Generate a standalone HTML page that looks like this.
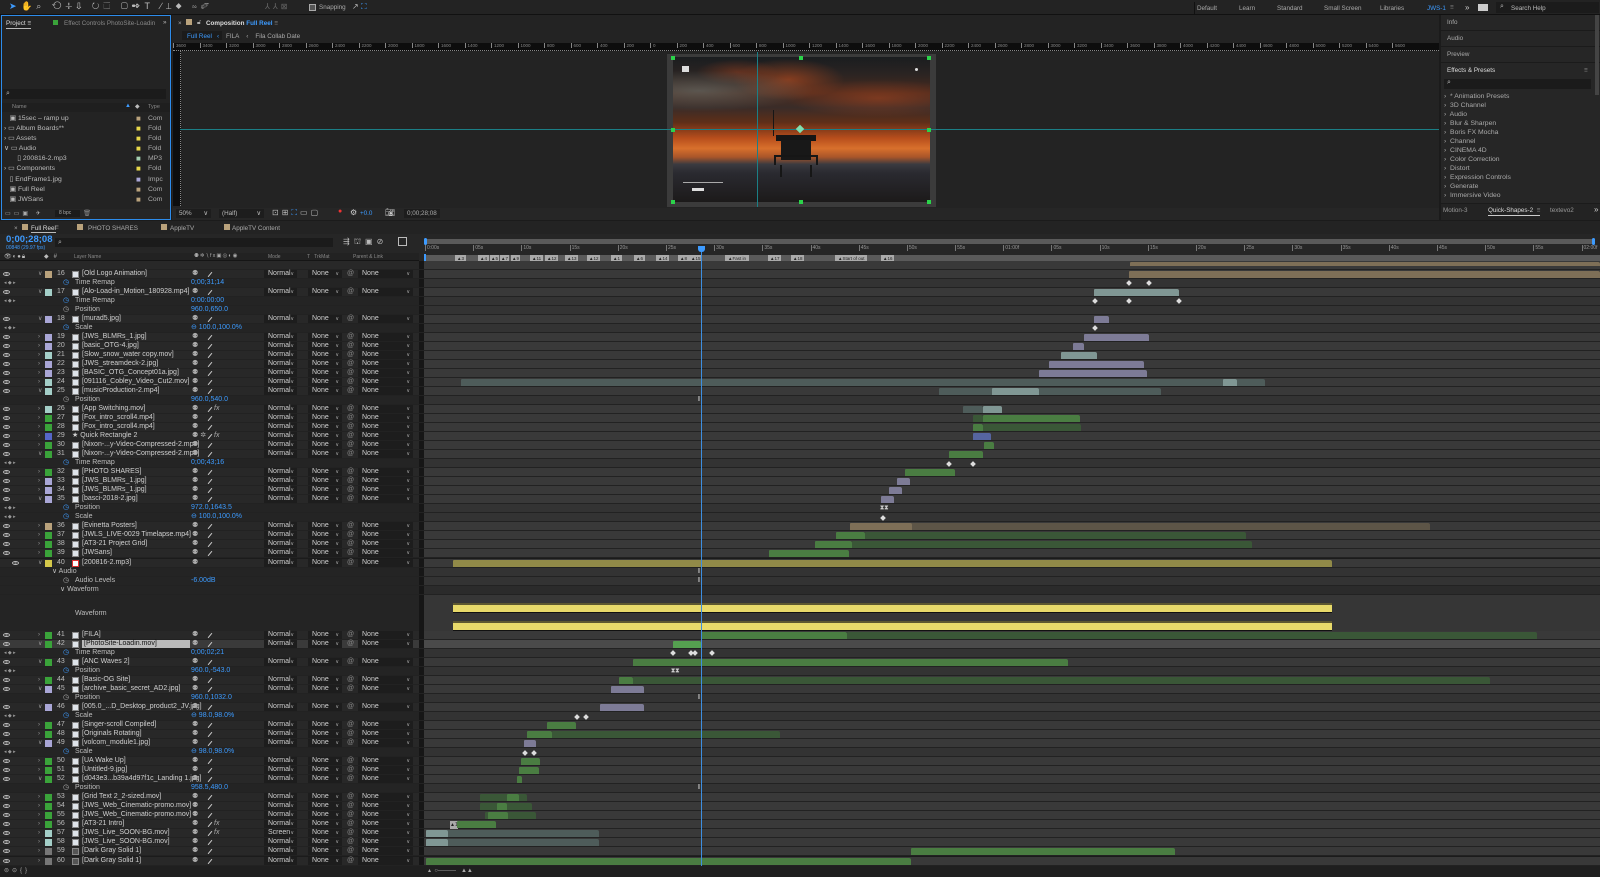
<!DOCTYPE html>
<html><head><meta charset="utf-8"><style>
*{margin:0;padding:0;box-sizing:border-box}
body{width:1600px;height:877px;overflow:hidden;background:#1b1b1b;font-family:"Liberation Sans",sans-serif;font-size:6.3px;color:#a8a8a8;position:relative}
em,i{font-style:normal}u,s{text-decoration:none}
.a{position:absolute;white-space:nowrap}
.r{position:absolute;left:0;width:1600px;height:9px;font-size:7px;background:linear-gradient(90deg,#282828 0,#282828 419px,#161616 419px,#161616 424px,#393939 424px);border-bottom:1px solid #222}
.r.p{background:linear-gradient(90deg,#242424 0,#242424 419px,#161616 419px,#161616 424px,#333 424px)}
.r.sel{background:linear-gradient(90deg,#3a3a3a 0,#3a3a3a 419px,#161616 419px,#161616 424px,#4a4a4a 424px)}
.r>*{position:absolute;top:0;line-height:8px;white-space:nowrap}
.eye{left:3px;top:2px!important;width:7px;height:4px;border:1px solid #bbb;border-radius:50%;background:radial-gradient(#bbb 0 1px,transparent 1.3px)}
.tw{left:38px;color:#999;font-size:6px}
.lb{left:45px;top:1px!important;width:7px;height:7px}
.n{left:57px;color:#bbb}
.ic{left:72px;top:1px!important;width:7px;height:7px;background:#dfe4ea;border:1px solid #888}
.nm{left:82px;color:#cfcfcf}
.sh{left:192px;color:#aaa}
.sl{left:207px;width:6px;height:1px;top:4px!important;background:#ccc;transform:rotate(-50deg)}
.fx{left:214px;font-style:italic;color:#aaa}
.md{left:264px;width:33px;height:8px;background:#1d1d1d;color:#cfcfcf;padding-left:4px}
.md:after,.tm:after,.pl:after{content:"∨";position:absolute;right:3px;font-size:5px;color:#aaa}
.tm{left:308px;width:34px;height:8px;background:#1d1d1d;color:#cfcfcf;padding-left:4px}
.sp{left:347px;color:#888}
.pl{left:358px;width:55px;height:8px;background:#1d1d1d;color:#cfcfcf;padding-left:4px}
.pn{left:75px;color:#bdbdbd}
.pw{left:63px;color:#3d9bff}
.pv{left:191px;color:#3d9bff}
.kn{left:4px;color:#999;font-size:5px}
b{position:absolute;top:1px!important;height:7px;border-radius:1px 2px 0 0}
.g{background:#4a7d42}.gf{background:#3a5737}.t{background:#809794}.tf{background:#4e5c5a}.v{background:#7d7b96}.tn{background:#7e6f57}.tnf{background:#5d5547}.bl{background:#56659f}.y{background:#918a48}
.k{position:absolute;top:2.5px!important;width:4px;height:4px;background:#ddd;transform:rotate(45deg)}
.I{position:absolute;color:#ccc;font-size:7px;font-weight:bold}
</style></head><body>

<div class="a" style="left:0;top:0;width:1600px;height:15px;background:#232323;border-bottom:1px solid #111"></div>
<div class="a" style="left:9px;top:1px;font-size:9px;color:#3d9bff">➤</div>
<div class="a" style="left:21px;top:1px;font-size:9px;color:#bbb;letter-spacing:4px">✋⌕ ⟲✛⇩ ↻⬚ ▢✒T ∕⊥⬥ ∾✐</div>
<div class="a" style="left:265px;top:2px;font-size:8px;color:#666;letter-spacing:3px">⅄⅄⊠</div>
<div class="a" style="left:309px;top:4px;width:7px;height:7px;border:1px solid #aaa;background:#555"></div>
<div class="a" style="left:319px;top:4px;color:#aaa">Snapping</div>
<div class="a" style="left:352px;top:2px;color:#bbb;font-size:8px">↗ <span style="color:#3d9bff">⛶</span></div>
<div class="a" style="left:1194px;top:2px;width:1px;height:12px;background:#111"></div>
<div class="a" style="left:1197px;top:5px;color:#aaa">Default</div>
<div class="a" style="left:1239px;top:5px;color:#aaa">Learn</div>
<div class="a" style="left:1277px;top:5px;color:#aaa">Standard</div>
<div class="a" style="left:1324px;top:5px;color:#aaa">Small Screen</div>
<div class="a" style="left:1380px;top:5px;color:#aaa">Libraries</div>
<div class="a" style="left:1427px;top:5px;color:#3d9bff">JWS-1</div>
<div class="a" style="left:1450px;top:4px;color:#888">≡</div>
<div class="a" style="left:1465px;top:3px;color:#ccc;font-size:8px">»</div>
<div class="a" style="left:1478px;top:4px;width:10px;height:7px;background:#ccc"></div>
<div class="a" style="left:1496px;top:2px;width:103px;height:11px;background:#1b1b1b"></div>
<div class="a" style="left:1500px;top:3px;color:#bbb;font-size:7px">⌕</div>
<div class="a" style="left:1511px;top:5px;color:#bbb">Search Help</div>

<div class="a" style="left:1px;top:15px;width:170px;height:205px;background:#232323;border:1px solid #2d8ceb"></div>
<div class="a" style="left:6px;top:20px;color:#ddd;border-bottom:1px solid #bbb;padding-bottom:1px">Project ≡</div>
<div class="a" style="left:53px;top:20px;width:5px;height:5px;background:#3aa33a"></div>
<div class="a" style="left:64px;top:20px;color:#888">Effect Controls PhotoSite-Loadin</div>
<div class="a" style="left:163px;top:19px;color:#bbb">»</div>
<div class="a" style="left:3px;top:89px;width:163px;height:10px;background:#1b1b1b"></div>
<div class="a" style="left:6px;top:90px;color:#bbb;font-size:7px">⌕</div>
<div class="a" style="left:2px;top:103px;width:168px;height:9px;background:#1f1f1f"></div>
<div class="a" style="left:12px;top:104px;color:#888;font-size:5.5px">Name</div>
<div class="a" style="left:125px;top:103px;color:#3d9bff;font-size:6px">▲</div>
<div class="a" style="left:135px;top:103px;color:#bbb;font-size:6px">◆</div>
<div class="a" style="left:148px;top:104px;color:#888;font-size:5.5px">Type</div>
<div class="a" style="left:4px;top:114px;line-height:10.1px;color:#bdbdbd;font-size:6.8px">
<div>&nbsp;&nbsp;&nbsp;▣ 15sec – ramp up</div><div>› ▭ Album Boards**</div><div>› ▭ Assets</div><div>∨ ▭ Audio</div><div>&nbsp;&nbsp;&nbsp;&nbsp;&nbsp;&nbsp;&nbsp;▯ 200816-2.mp3</div><div>› ▭ Components</div><div>&nbsp;&nbsp;&nbsp;▯ EndFrame1.jpg</div><div>&nbsp;&nbsp;&nbsp;▣ Full Reel</div><div>&nbsp;&nbsp;&nbsp;▣ JWSans</div></div>
<div class="a" style="left:136px;top:114px;line-height:10.1px;font-size:8px"><div style="color:#b9a27c">■</div><div style="color:#e8d84a">■</div><div style="color:#e8d84a">■</div><div style="color:#e8d84a">■</div><div style="color:#a4cfb0">■</div><div style="color:#e8d84a">■</div><div style="color:#a9a6d6">■</div><div style="color:#b9a27c">■</div><div style="color:#b9a27c">■</div></div>
<div class="a" style="left:148px;top:114px;line-height:10.1px;color:#aaa;font-size:6.8px"><div>Com</div><div>Fold</div><div>Fold</div><div>Fold</div><div>MP3</div><div>Fold</div><div>Impc</div><div>Com</div><div>Com</div></div>
<div class="a" style="left:2px;top:209px;width:168px;height:10px;background:#262626"></div>
<div class="a" style="left:5px;top:210px;color:#aaa;font-size:6px;letter-spacing:3px">▭▭▣ ✈</div>
<div class="a" style="left:55px;top:210px;width:25px;height:7px;background:#1b1b1b;color:#aaa;font-size:5px;padding-left:4px;line-height:7px">8 bpc</div>
<div class="a" style="left:83px;top:209px;color:#888">🗑</div>

<div class="a" style="left:172px;top:15px;width:1267px;height:205px;background:#232323"></div>
<div class="a" style="left:178px;top:20px;color:#aaa">×</div>
<div class="a" style="left:186px;top:19px;width:6px;height:6px;background:#b9a27c"></div>
<div class="a" style="left:197px;top:19px;color:#aaa">🔓︎</div>
<div class="a" style="left:206px;top:20px;color:#ddd;font-weight:bold">Composition <span style="color:#3d9bff">Full Reel</span> <span style="color:#888;font-weight:normal">≡</span></div>
<div class="a" style="left:182px;top:31px;width:40px;height:9px;background:#1b1b1b"></div>
<div class="a" style="left:187px;top:33px;color:#3d9bff">Full Reel</div>
<div class="a" style="left:217px;top:33px;color:#3d9bff">‹</div>
<div class="a" style="left:226px;top:33px;color:#aaa">FILA&nbsp;&nbsp;&nbsp;&nbsp;‹&nbsp;&nbsp;&nbsp;&nbsp;Fila Collab Date</div>
<div class="a" style="left:173px;top:43px;width:1266px;height:8px;background:#0d0d0d;border-bottom:1px dotted #888;overflow:hidden">
<div class="a" style="left:0;top:0;color:#888;font-size:4.5px">
<span style="display:inline-block;width:26.5px;border-left:1px solid #888;padding-left:2px">3600</span><span style="display:inline-block;width:26.5px;border-left:1px solid #888;padding-left:2px">3400</span><span style="display:inline-block;width:26.5px;border-left:1px solid #888;padding-left:2px">3200</span><span style="display:inline-block;width:26.5px;border-left:1px solid #888;padding-left:2px">3000</span><span style="display:inline-block;width:26.5px;border-left:1px solid #888;padding-left:2px">2800</span><span style="display:inline-block;width:26.5px;border-left:1px solid #888;padding-left:2px">2600</span><span style="display:inline-block;width:26.5px;border-left:1px solid #888;padding-left:2px">2400</span><span style="display:inline-block;width:26.5px;border-left:1px solid #888;padding-left:2px">2200</span><span style="display:inline-block;width:26.5px;border-left:1px solid #888;padding-left:2px">2000</span><span style="display:inline-block;width:26.5px;border-left:1px solid #888;padding-left:2px">1800</span><span style="display:inline-block;width:26.5px;border-left:1px solid #888;padding-left:2px">1600</span><span style="display:inline-block;width:26.5px;border-left:1px solid #888;padding-left:2px">1400</span><span style="display:inline-block;width:26.5px;border-left:1px solid #888;padding-left:2px">1200</span><span style="display:inline-block;width:26.5px;border-left:1px solid #888;padding-left:2px">1000</span><span style="display:inline-block;width:26.5px;border-left:1px solid #888;padding-left:2px">800</span><span style="display:inline-block;width:26.5px;border-left:1px solid #888;padding-left:2px">600</span><span style="display:inline-block;width:26.5px;border-left:1px solid #888;padding-left:2px">400</span><span style="display:inline-block;width:26.5px;border-left:1px solid #888;padding-left:2px">200</span><span style="display:inline-block;width:26.5px;border-left:1px solid #888;padding-left:2px">0</span><span style="display:inline-block;width:26.5px;border-left:1px solid #888;padding-left:2px">200</span><span style="display:inline-block;width:26.5px;border-left:1px solid #888;padding-left:2px">400</span><span style="display:inline-block;width:26.5px;border-left:1px solid #888;padding-left:2px">600</span><span style="display:inline-block;width:26.5px;border-left:1px solid #888;padding-left:2px">800</span><span style="display:inline-block;width:26.5px;border-left:1px solid #888;padding-left:2px">1000</span><span style="display:inline-block;width:26.5px;border-left:1px solid #888;padding-left:2px">1200</span><span style="display:inline-block;width:26.5px;border-left:1px solid #888;padding-left:2px">1400</span><span style="display:inline-block;width:26.5px;border-left:1px solid #888;padding-left:2px">1600</span><span style="display:inline-block;width:26.5px;border-left:1px solid #888;padding-left:2px">1800</span><span style="display:inline-block;width:26.5px;border-left:1px solid #888;padding-left:2px">2000</span><span style="display:inline-block;width:26.5px;border-left:1px solid #888;padding-left:2px">2200</span><span style="display:inline-block;width:26.5px;border-left:1px solid #888;padding-left:2px">2400</span><span style="display:inline-block;width:26.5px;border-left:1px solid #888;padding-left:2px">2600</span><span style="display:inline-block;width:26.5px;border-left:1px solid #888;padding-left:2px">2800</span><span style="display:inline-block;width:26.5px;border-left:1px solid #888;padding-left:2px">3000</span><span style="display:inline-block;width:26.5px;border-left:1px solid #888;padding-left:2px">3200</span><span style="display:inline-block;width:26.5px;border-left:1px solid #888;padding-left:2px">3400</span><span style="display:inline-block;width:26.5px;border-left:1px solid #888;padding-left:2px">3600</span><span style="display:inline-block;width:26.5px;border-left:1px solid #888;padding-left:2px">3800</span><span style="display:inline-block;width:26.5px;border-left:1px solid #888;padding-left:2px">4000</span><span style="display:inline-block;width:26.5px;border-left:1px solid #888;padding-left:2px">4200</span><span style="display:inline-block;width:26.5px;border-left:1px solid #888;padding-left:2px">4400</span><span style="display:inline-block;width:26.5px;border-left:1px solid #888;padding-left:2px">4600</span><span style="display:inline-block;width:26.5px;border-left:1px solid #888;padding-left:2px">4800</span><span style="display:inline-block;width:26.5px;border-left:1px solid #888;padding-left:2px">5000</span><span style="display:inline-block;width:26.5px;border-left:1px solid #888;padding-left:2px">5200</span><span style="display:inline-block;width:26.5px;border-left:1px solid #888;padding-left:2px">5400</span><span style="display:inline-block;width:26.5px;border-left:1px solid #888;padding-left:2px">5600</span></div></div>
<div class="a" style="left:173px;top:51px;width:8px;height:155px;background:#0d0d0d;border-right:1px dotted #888"></div>
<div class="a" style="left:667px;top:54px;width:269px;height:153px;background:#3b3b3b"></div>
<div class="a" style="left:673px;top:57px;width:257px;height:145px;background:linear-gradient(180deg,#1a1d20 0%,#2b2422 12%,#4a2a1e 25%,#3a2c28 35%,#5e2e18 45%,#b84e1c 56%,#d8702c 63%,#a9552a 69%,#3a3a40 74%,#2a2a30 80%,#1c1a1a 100%)"></div>
<div class="a" style="left:673px;top:57px;width:257px;height:75px;background:radial-gradient(ellipse at 10% 45%,rgba(110,130,128,.5),transparent 35%),radial-gradient(ellipse at 45% 30%,rgba(200,80,30,.55),transparent 28%),radial-gradient(ellipse at 80% 55%,rgba(190,75,30,.45),transparent 32%),radial-gradient(ellipse at 25% 20%,rgba(180,70,30,.4),transparent 15%)"></div>
<div class="a" style="left:776px;top:135px;width:40px;height:6px;background:#151515"></div>
<div class="a" style="left:781px;top:140px;width:30px;height:20px;background:#181818"></div>
<div class="a" style="left:774px;top:155px;width:44px;height:10px;border:2px solid #161616;border-bottom:none"></div>
<div class="a" style="left:780px;top:165px;width:32px;height:12px;border-left:2px solid #161616;border-right:2px solid #161616"></div>
<div class="a" style="left:773px;top:110px;width:1px;height:26px;background:#161616"></div>
<div class="a" style="left:682px;top:66px;width:7px;height:6px;background:#ddd"></div>
<div class="a" style="left:915px;top:68px;width:3px;height:3px;background:#ddd;border-radius:50%"></div>
<div class="a" style="left:180px;top:129px;width:1259px;height:1px;background:#1b7f86"></div>
<div class="a" style="left:757px;top:52px;width:1px;height:155px;background:#1b7f86"></div>
<div class="a" style="left:797px;top:126px;width:6px;height:6px;background:#7fe0b0;transform:rotate(45deg)"></div>
<div class="a" style="left:671px;top:56px;width:4px;height:4px;background:#2bd34a"></div>
<div class="a" style="left:799px;top:56px;width:4px;height:4px;background:#2bd34a"></div>
<div class="a" style="left:927px;top:56px;width:4px;height:4px;background:#2bd34a"></div>
<div class="a" style="left:671px;top:128px;width:4px;height:4px;background:#2bd34a"></div>
<div class="a" style="left:927px;top:128px;width:4px;height:4px;background:#2bd34a"></div>
<div class="a" style="left:671px;top:200px;width:4px;height:4px;background:#2bd34a"></div>
<div class="a" style="left:799px;top:200px;width:4px;height:4px;background:#2bd34a"></div>
<div class="a" style="left:927px;top:200px;width:4px;height:4px;background:#2bd34a"></div>
<div class="a" style="left:683px;top:182px;width:40px;height:1px;background:#aaa"></div>
<div class="a" style="left:692px;top:188px;width:12px;height:3px;background:#ddd"></div>
<div class="a" style="left:172px;top:208px;width:1267px;height:12px;background:#262626"></div>
<div class="a" style="left:176px;top:209px;width:35px;height:9px;background:#1d1d1d;color:#bbb;padding-left:3px;line-height:9px">50%<span style="float:right;margin-right:3px">∨</span></div>
<div class="a" style="left:219px;top:209px;width:45px;height:9px;background:#1d1d1d;color:#bbb;padding-left:3px;line-height:9px">(Half)<span style="float:right;margin-right:3px">∨</span></div>
<div class="a" style="left:272px;top:208px;color:#bbb;font-size:8px;letter-spacing:3px">⊡⊞<span style="color:#3d9bff">⛶</span>▭▢</div>
<div class="a" style="left:338px;top:208px;color:#e33;font-size:7px">●</div>
<div class="a" style="left:350px;top:208px;color:#ccc;font-size:8px">⚙</div>
<div class="a" style="left:360px;top:210px;color:#3d9bff">+0.0</div>
<div class="a" style="left:385px;top:208px;color:#ccc;font-size:8px">📷︎</div>
<div class="a" style="left:404px;top:209px;width:36px;height:9px;background:#1d1d1d;color:#aaa;padding-left:3px;line-height:9px">0;00;28;08</div>

<div class="a" style="left:1441px;top:15px;width:159px;height:15px;background:#262626"></div>
<div class="a" style="left:1447px;top:19px;color:#aaa">Info</div>
<div class="a" style="left:1441px;top:31px;width:159px;height:15px;background:#262626"></div>
<div class="a" style="left:1447px;top:35px;color:#aaa">Audio</div>
<div class="a" style="left:1441px;top:47px;width:159px;height:15px;background:#262626"></div>
<div class="a" style="left:1447px;top:51px;color:#aaa">Preview</div>
<div class="a" style="left:1441px;top:63px;width:159px;height:140px;background:#262626"></div>
<div class="a" style="left:1447px;top:67px;color:#ddd">Effects &amp; Presets</div>
<div class="a" style="left:1584px;top:67px;color:#888">≡</div>
<div class="a" style="left:1444px;top:79px;width:147px;height:10px;background:#1b1b1b;color:#bbb;padding-left:3px;font-size:7px">⌕</div>
<div class="a" style="left:1444px;top:92px;line-height:9.03px;color:#aaa;font-size:6.8px">
<div>›&nbsp; * Animation Presets</div><div>›&nbsp; 3D Channel</div><div>›&nbsp; Audio</div><div>›&nbsp; Blur &amp; Sharpen</div><div>›&nbsp; Boris FX Mocha</div><div>›&nbsp; Channel</div><div>›&nbsp; CINEMA 4D</div><div>›&nbsp; Color Correction</div><div>›&nbsp; Distort</div><div>›&nbsp; Expression Controls</div><div>›&nbsp; Generate</div><div>›&nbsp; Immersive Video</div></div>
<div class="a" style="left:1595px;top:15px;width:4px;height:80px;background:#444"></div>
<div class="a" style="left:1441px;top:204px;width:159px;height:16px;background:#232323"></div>
<div class="a" style="left:1443px;top:207px;color:#999">Motion-3</div>
<div class="a" style="left:1488px;top:207px;color:#ddd;border-bottom:1px solid #ccc;padding-bottom:1px">Quick-Shapes-2&nbsp; <span style="color:#888">≡</span></div>
<div class="a" style="left:1550px;top:207px;color:#999">textevo2</div>
<div class="a" style="left:1594px;top:205px;color:#ccc;font-size:8px">»</div>

<div class="a" style="left:0;top:221px;width:1600px;height:13px;background:#232323"></div>
<div class="a" style="left:14px;top:225px;color:#aaa">×</div>
<div class="a" style="left:22px;top:224px;width:6px;height:6px;background:#b9a27c"></div>
<div class="a" style="left:31px;top:225px;color:#ddd;border-bottom:1px solid #bbb">Full Reel</div>
<div class="a" style="left:55px;top:224px;color:#888">≡</div>
<div class="a" style="left:77px;top:224px;width:6px;height:6px;background:#b9a27c"></div>
<div class="a" style="left:88px;top:225px;color:#aaa">PHOTO SHARES</div>
<div class="a" style="left:161px;top:224px;width:6px;height:6px;background:#b9a27c"></div>
<div class="a" style="left:170px;top:225px;color:#aaa">AppleTV</div>
<div class="a" style="left:224px;top:224px;width:6px;height:6px;background:#b9a27c"></div>
<div class="a" style="left:232px;top:225px;color:#aaa">AppleTV Content</div>
<div class="a" style="left:0;top:234px;width:419px;height:19px;background:#262626"></div>
<div class="a" style="left:6px;top:234px;color:#3d9bff;font-size:9.5px;font-weight:bold">0;00;28;08</div>
<div class="a" style="left:6px;top:245px;color:#3d9bff;font-size:5px">00848 (29.97 fps)</div>
<div class="a" style="left:55px;top:238px;width:278px;height:9px;background:#1b1b1b;color:#bbb;padding-left:3px;font-size:7px;line-height:9px">⌕</div>
<div class="a" style="left:343px;top:237px;color:#bbb;font-size:8px;letter-spacing:4px">⇶⛫▣⊘</div>
<div class="a" style="left:398px;top:237px;width:9px;height:9px;border:1px solid #bbb"></div>
<div class="a" style="left:0;top:253px;width:419px;height:8px;background:#222;border-bottom:1px solid #151515"></div>
<div class="a" style="left:4px;top:253px;color:#bbb;font-size:6px;letter-spacing:1px">👁︎◐●🔒︎</div>
<div class="a" style="left:44px;top:253px;color:#bbb;font-size:6px">◆&nbsp;&nbsp; #</div>
<div class="a" style="left:74px;top:254px;color:#888;font-size:5px">Layer Name</div>
<div class="a" style="left:194px;top:253px;color:#aaa;font-size:5.5px;letter-spacing:1px">⚉✲∖fx▣◎◐◉</div>
<div class="a" style="left:268px;top:254px;color:#888;font-size:5px">Mode</div>
<div class="a" style="left:307px;top:254px;color:#888;font-size:5px">T&nbsp;&nbsp; TrkMat</div>
<div class="a" style="left:353px;top:254px;color:#888;font-size:5px">Parent &amp; Link</div>
<div class="a" style="left:419px;top:234px;width:1181px;height:27px;background:#262626"></div>
<div class="a" style="left:425px;top:239px;width:1170px;height:5px;background:#5a5a5a"></div>
<div class="a" style="left:424px;top:238px;width:3px;height:7px;background:#3d9bff;border-radius:2px"></div>
<div class="a" style="left:1592px;top:238px;width:3px;height:7px;background:#3d9bff;border-radius:2px"></div>
<div class="a" style="left:425px;top:245px;width:1175px;height:8px;color:#999;font-size:5px;overflow:hidden"><div style="white-space:nowrap"><span style="display:inline-block;width:48.2px;border-left:1px solid #777;padding-left:1px">0:00s</span><span style="display:inline-block;width:48.2px;border-left:1px solid #777;padding-left:1px">05s</span><span style="display:inline-block;width:48.2px;border-left:1px solid #777;padding-left:1px">10s</span><span style="display:inline-block;width:48.2px;border-left:1px solid #777;padding-left:1px">15s</span><span style="display:inline-block;width:48.2px;border-left:1px solid #777;padding-left:1px">20s</span><span style="display:inline-block;width:48.2px;border-left:1px solid #777;padding-left:1px">25s</span><span style="display:inline-block;width:48.2px;border-left:1px solid #777;padding-left:1px">30s</span><span style="display:inline-block;width:48.2px;border-left:1px solid #777;padding-left:1px">35s</span><span style="display:inline-block;width:48.2px;border-left:1px solid #777;padding-left:1px">40s</span><span style="display:inline-block;width:48.2px;border-left:1px solid #777;padding-left:1px">45s</span><span style="display:inline-block;width:48.2px;border-left:1px solid #777;padding-left:1px">50s</span><span style="display:inline-block;width:48.2px;border-left:1px solid #777;padding-left:1px">55s</span><span style="display:inline-block;width:48.2px;border-left:1px solid #777;padding-left:1px">01:00f</span><span style="display:inline-block;width:48.2px;border-left:1px solid #777;padding-left:1px">05s</span><span style="display:inline-block;width:48.2px;border-left:1px solid #777;padding-left:1px">10s</span><span style="display:inline-block;width:48.2px;border-left:1px solid #777;padding-left:1px">15s</span><span style="display:inline-block;width:48.2px;border-left:1px solid #777;padding-left:1px">20s</span><span style="display:inline-block;width:48.2px;border-left:1px solid #777;padding-left:1px">25s</span><span style="display:inline-block;width:48.2px;border-left:1px solid #777;padding-left:1px">30s</span><span style="display:inline-block;width:48.2px;border-left:1px solid #777;padding-left:1px">35s</span><span style="display:inline-block;width:48.2px;border-left:1px solid #777;padding-left:1px">40s</span><span style="display:inline-block;width:48.2px;border-left:1px solid #777;padding-left:1px">45s</span><span style="display:inline-block;width:48.2px;border-left:1px solid #777;padding-left:1px">50s</span><span style="display:inline-block;width:48.2px;border-left:1px solid #777;padding-left:1px">55s</span><span style="display:inline-block;width:48.2px;border-left:1px solid #777;padding-left:1px">02:00f</span></div></div>
<div class="a" style="left:425px;top:255px;width:1175px;height:7px;background:#5a5a5a"></div>
<div class="a" style="left:424px;top:254px;width:2px;height:8px;background:#3d9bff"></div>
<div class="a" style="left:425px;top:255px;height:7px;font-size:4.5px;line-height:7px;color:#222">
<span class="a" style="left:30px;background:#aaa;padding:0 2px">▲3</span><span class="a" style="left:53px;background:#aaa;padding:0 2px">▲4</span><span class="a" style="left:65px;background:#aaa;padding:0 1px">▲5</span><span class="a" style="left:75px;background:#aaa;padding:0 1px">▲7</span><span class="a" style="left:86px;background:#aaa;padding:0 1px">▲9</span><span class="a" style="left:105px;background:#aaa;padding:0 2px">▲11</span><span class="a" style="left:120px;background:#aaa;padding:0 2px">▲12</span><span class="a" style="left:140px;background:#aaa;padding:0 2px">▲13</span><span class="a" style="left:162px;background:#aaa;padding:0 2px">▲12</span><span class="a" style="left:186px;background:#aaa;padding:0 2px">▲1</span><span class="a" style="left:209px;background:#aaa;padding:0 2px">▲6</span><span class="a" style="left:231px;background:#aaa;padding:0 2px">▲14</span><span class="a" style="left:253px;background:#aaa;padding:0 2px">▲8</span><span class="a" style="left:264px;background:#aaa;padding:0 2px">▲15</span><span class="a" style="left:300px;background:#aaa;padding:0 3px">▲Fast in</span><span class="a" style="left:343px;background:#aaa;padding:0 2px">▲17</span><span class="a" style="left:366px;background:#aaa;padding:0 2px">▲18</span><span class="a" style="left:410px;background:#aaa;padding:0 3px">▲Start of out</span><span class="a" style="left:456px;background:#aaa;padding:0 2px">▲16</span></div>

<div class="r" style="top:260.5px"><b class="tn" style="left:1130px;width:470px;height:4px!important"></b></div>
<div class="r" style="top:269.5px"><s class="eye"></s><u class="tw">∨</u><i class="lb" style="background:#b9a27c"></i><em class="n">16</em><i class="ic"></i><span class="nm">[Old Logo Animation]</span><span class="sh">⚉</span><i class="sl"></i><span class="md">Normal</span><span class="tm">None</span><span class="sp">@</span><span class="pl">None</span><b class="tn" style="left:1129px;width:471px"></b></div>
<div class="r p" style="top:278.5px"><span class="kn">◂ ◆ ▸</span><span class="pw">◷</span><span class="pn">Time Remap</span><span class="pv">0;00;31;14</span><i class="k" style="left:1127px"></i><i class="k" style="left:1147px"></i></div>
<div class="r" style="top:287.6px"><s class="eye"></s><u class="tw">∨</u><i class="lb" style="background:#a4cfc8"></i><em class="n">17</em><i class="ic"></i><span class="nm">[Alo-Load-in_Motion_180928.mp4]</span><span class="sh">⚉</span><i class="sl"></i><span class="md">Normal</span><span class="tm">None</span><span class="sp">@</span><span class="pl">None</span><b class="t" style="left:1094px;width:85px"></b></div>
<div class="r p" style="top:296.6px"><span class="kn">◂ ◆ ▸</span><span class="pw">◷</span><span class="pn">Time Remap</span><span class="pv">0:00:00:00</span><i class="k" style="left:1093px"></i><i class="k" style="left:1127px"></i><i class="k" style="left:1177px"></i></div>
<div class="r p" style="top:305.6px"><span class="pw" style="color:#aaa">◷</span><span class="pn">Position</span><span class="pv">960.0,650.0</span></div>
<div class="r" style="top:314.7px"><s class="eye"></s><u class="tw">∨</u><i class="lb" style="background:#a9a6d6"></i><em class="n">18</em><i class="ic"></i><span class="nm">[murad5.jpg]</span><span class="sh">⚉</span><i class="sl"></i><span class="md">Normal</span><span class="tm">None</span><span class="sp">@</span><span class="pl">None</span><b class="v" style="left:1094px;width:15px"></b></div>
<div class="r p" style="top:323.7px"><span class="kn">◂ ◆ ▸</span><span class="pw">◷</span><span class="pn">Scale</span><span class="pv">⊖ 100.0,100.0%</span><i class="k" style="left:1093px"></i></div>
<div class="r" style="top:332.7px"><s class="eye"></s><u class="tw">›</u><i class="lb" style="background:#a9a6d6"></i><em class="n">19</em><i class="ic"></i><span class="nm">[JWS_BLMRs_1.jpg]</span><span class="sh">⚉</span><i class="sl"></i><span class="md">Normal</span><span class="tm">None</span><span class="sp">@</span><span class="pl">None</span><b class="v" style="left:1084px;width:65px"></b></div>
<div class="r" style="top:341.7px"><s class="eye"></s><u class="tw">›</u><i class="lb" style="background:#a9a6d6"></i><em class="n">20</em><i class="ic"></i><span class="nm">[basic_OTG-4.jpg]</span><span class="sh">⚉</span><i class="sl"></i><span class="md">Normal</span><span class="tm">None</span><span class="sp">@</span><span class="pl">None</span><b class="v" style="left:1073px;width:11px"></b></div>
<div class="r" style="top:350.8px"><s class="eye"></s><u class="tw">›</u><i class="lb" style="background:#a4cfc8"></i><em class="n">21</em><i class="ic"></i><span class="nm">[Slow_snow_water copy.mov]</span><span class="sh">⚉</span><i class="sl"></i><span class="md">Normal</span><span class="tm">None</span><span class="sp">@</span><span class="pl">None</span><b class="t" style="left:1061px;width:36px"></b></div>
<div class="r" style="top:359.8px"><s class="eye"></s><u class="tw">›</u><i class="lb" style="background:#a9a6d6"></i><em class="n">22</em><i class="ic"></i><span class="nm">[JWS_streamdeck-2.jpg]</span><span class="sh">⚉</span><i class="sl"></i><span class="md">Normal</span><span class="tm">None</span><span class="sp">@</span><span class="pl">None</span><b class="v" style="left:1049px;width:95px"></b></div>
<div class="r" style="top:368.8px"><s class="eye"></s><u class="tw">›</u><i class="lb" style="background:#a9a6d6"></i><em class="n">23</em><i class="ic"></i><span class="nm">[BASIC_OTG_Concept01a.jpg]</span><span class="sh">⚉</span><i class="sl"></i><span class="md">Normal</span><span class="tm">None</span><span class="sp">@</span><span class="pl">None</span><b class="v" style="left:1039px;width:108px"></b></div>
<div class="r" style="top:377.9px"><s class="eye"></s><u class="tw">›</u><i class="lb" style="background:#a4cfc8"></i><em class="n">24</em><i class="ic"></i><span class="nm">[091116_Cobley_Video_Cut2.mov]</span><span class="sh">⚉</span><i class="sl"></i><span class="md">Normal</span><span class="tm">None</span><span class="sp">@</span><span class="pl">None</span><b class="tf" style="left:461px;width:804px"></b><b class="t" style="left:1223px;width:14px"></b></div>
<div class="r" style="top:386.9px"><s class="eye"></s><u class="tw">∨</u><i class="lb" style="background:#a4cfc8"></i><em class="n">25</em><i class="ic"></i><span class="nm">[musicProduction-2.mp4]</span><span class="sh">⚉</span><i class="sl"></i><span class="md">Normal</span><span class="tm">None</span><span class="sp">@</span><span class="pl">None</span><b class="tf" style="left:939px;width:222px"></b><b class="t" style="left:992px;width:47px"></b></div>
<div class="r p" style="top:395.9px"><span class="pw" style="color:#aaa">◷</span><span class="pn">Position</span><span class="pv">960.0,540.0</span><span class="I" style="left:698px">I</span></div>
<div class="r" style="top:405px"><s class="eye"></s><u class="tw">›</u><i class="lb" style="background:#a4cfc8"></i><em class="n">26</em><i class="ic"></i><span class="nm">[App Switching.mov]</span><span class="sh">⚉</span><i class="sl"></i><span class="fx">fx</span><span class="md">Normal</span><span class="tm">None</span><span class="sp">@</span><span class="pl">None</span><b class="tf" style="left:963px;width:20px"></b><b class="t" style="left:983px;width:19px"></b></div>
<div class="r" style="top:414px"><s class="eye"></s><u class="tw">›</u><i class="lb" style="background:#3aa33a"></i><em class="n">27</em><i class="ic"></i><span class="nm">[Fox_intro_scroll4.mp4]</span><span class="sh">⚉</span><i class="sl"></i><span class="md">Normal</span><span class="tm">None</span><span class="sp">@</span><span class="pl">None</span><b class="gf" style="left:973px;width:10px"></b><b class="g" style="left:983px;width:97px"></b></div>
<div class="r" style="top:423px"><s class="eye"></s><u class="tw">›</u><i class="lb" style="background:#3aa33a"></i><em class="n">28</em><i class="ic"></i><span class="nm">[Fox_intro_scroll4.mp4]</span><span class="sh">⚉</span><i class="sl"></i><span class="md">Normal</span><span class="tm">None</span><span class="sp">@</span><span class="pl">None</span><b class="g" style="left:973px;width:10px"></b><b class="gf" style="left:983px;width:98px"></b></div>
<div class="r" style="top:432px"><s class="eye"></s><u class="tw">›</u><i class="lb" style="background:#5566c8"></i><em class="n">29</em><span class="nm" style="left:72px">★ Quick Rectangle 2</span><span class="sh">⚉ ✲</span><i class="sl"></i><span class="fx">fx</span><span class="md">Normal</span><span class="tm">None</span><span class="sp">@</span><span class="pl">None</span><b class="bl" style="left:973px;width:18px"></b></div>
<div class="r" style="top:441.1px"><s class="eye"></s><u class="tw">›</u><i class="lb" style="background:#3aa33a"></i><em class="n">30</em><i class="ic"></i><span class="nm">[Nixon-...y-Video-Compressed-2.mp4]</span><span class="sh">⚉</span><i class="sl"></i><span class="md">Normal</span><span class="tm">None</span><span class="sp">@</span><span class="pl">None</span><b class="g" style="left:984px;width:10px"></b></div>
<div class="r" style="top:450.1px"><s class="eye"></s><u class="tw">∨</u><i class="lb" style="background:#3aa33a"></i><em class="n">31</em><i class="ic"></i><span class="nm">[Nixon-...y-Video-Compressed-2.mp4]</span><span class="sh">⚉</span><i class="sl"></i><span class="md">Normal</span><span class="tm">None</span><span class="sp">@</span><span class="pl">None</span><b class="g" style="left:949px;width:34px"></b></div>
<div class="r p" style="top:459.1px"><span class="kn">◂ ◆ ▸</span><span class="pw">◷</span><span class="pn">Time Remap</span><span class="pv">0;00;43;16</span><i class="k" style="left:947px"></i><i class="k" style="left:971px"></i></div>
<div class="r" style="top:468.2px"><s class="eye"></s><u class="tw">›</u><i class="lb" style="background:#3aa33a"></i><em class="n">32</em><i class="ic"></i><span class="nm">[PHOTO SHARES]</span><span class="sh">⚉</span><i class="sl"></i><span class="md">Normal</span><span class="tm">None</span><span class="sp">@</span><span class="pl">None</span><b class="g" style="left:905px;width:50px"></b></div>
<div class="r" style="top:477.2px"><s class="eye"></s><u class="tw">›</u><i class="lb" style="background:#a9a6d6"></i><em class="n">33</em><i class="ic"></i><span class="nm">[JWS_BLMRs_1.jpg]</span><span class="sh">⚉</span><i class="sl"></i><span class="md">Normal</span><span class="tm">None</span><span class="sp">@</span><span class="pl">None</span><b class="v" style="left:897px;width:13px"></b></div>
<div class="r" style="top:486.2px"><s class="eye"></s><u class="tw">›</u><i class="lb" style="background:#a9a6d6"></i><em class="n">34</em><i class="ic"></i><span class="nm">[JWS_BLMRs_1.jpg]</span><span class="sh">⚉</span><i class="sl"></i><span class="md">Normal</span><span class="tm">None</span><span class="sp">@</span><span class="pl">None</span><b class="v" style="left:889px;width:13px"></b></div>
<div class="r" style="top:495.3px"><s class="eye"></s><u class="tw">∨</u><i class="lb" style="background:#a9a6d6"></i><em class="n">35</em><i class="ic"></i><span class="nm">[basci-2018-2.jpg]</span><span class="sh">⚉</span><i class="sl"></i><span class="md">Normal</span><span class="tm">None</span><span class="sp">@</span><span class="pl">None</span><b class="v" style="left:881px;width:13px"></b></div>
<div class="r p" style="top:504.3px"><span class="kn">◂ ◆ ▸</span><span class="pw">◷</span><span class="pn">Position</span><span class="pv">972.0,1643.5</span><span class="I" style="left:880px;font-size:6px">⧗⧗</span></div>
<div class="r p" style="top:513.3px"><span class="kn">◂ ◆ ▸</span><span class="pw">◷</span><span class="pn">Scale</span><span class="pv">⊖ 100.0,100.0%</span><i class="k" style="left:881px"></i></div>
<div class="r" style="top:522.3px"><s class="eye"></s><u class="tw">›</u><i class="lb" style="background:#b9a27c"></i><em class="n">36</em><i class="ic"></i><span class="nm">[Evinetta Posters]</span><span class="sh">⚉</span><i class="sl"></i><span class="md">Normal</span><span class="tm">None</span><span class="sp">@</span><span class="pl">None</span><b class="tnf" style="left:850px;width:580px"></b><b class="tn" style="left:850px;width:62px"></b></div>
<div class="r" style="top:531.4px"><s class="eye"></s><u class="tw">›</u><i class="lb" style="background:#3aa33a"></i><em class="n">37</em><i class="ic"></i><span class="nm">[JWLS_LIVE-0029 Timelapse.mp4]</span><span class="sh">⚉</span><i class="sl"></i><span class="md">Normal</span><span class="tm">None</span><span class="sp">@</span><span class="pl">None</span><b class="g" style="left:836px;width:29px"></b><b class="gf" style="left:865px;width:381px"></b></div>
<div class="r" style="top:540.4px"><s class="eye"></s><u class="tw">›</u><i class="lb" style="background:#3aa33a"></i><em class="n">38</em><i class="ic"></i><span class="nm">[AT3-21 Project Grid]</span><span class="sh">⚉</span><i class="sl"></i><span class="md">Normal</span><span class="tm">None</span><span class="sp">@</span><span class="pl">None</span><b class="g" style="left:815px;width:37px"></b><b class="gf" style="left:852px;width:400px"></b></div>
<div class="r" style="top:549.4px"><s class="eye"></s><u class="tw">›</u><i class="lb" style="background:#3aa33a"></i><em class="n">39</em><i class="ic"></i><span class="nm">[JWSans]</span><span class="sh">⚉</span><i class="sl"></i><span class="md">Normal</span><span class="tm">None</span><span class="sp">@</span><span class="pl">None</span><b class="g" style="left:769px;width:80px"></b></div>
<div class="r" style="top:558.5px"><s class="eye" style="left:12px"></s><u class="tw">∨</u><i class="lb" style="background:#d4c84a"></i><em class="n">40</em><i class="ic" style="background:#fff;border-color:#d33"></i><span class="nm">[200816-2.mp3]</span><span class="sh">⚉</span><span class="md">Normal</span><span class="tm">None</span><span class="sp">@</span><span class="pl">None</span><b class="y" style="left:453px;width:879px"></b></div>
<div class="r p" style="top:567.5px"><span class="pn" style="left:52px">∨ Audio</span><span class="I" style="left:698px">I</span></div>
<div class="r p" style="top:576.5px"><span class="pw" style="color:#aaa">◷</span><span class="pn">Audio Levels</span><span class="pv">-6.00dB</span><span class="I" style="left:698px">I</span></div>
<div class="r p" style="top:585.6px;background:linear-gradient(90deg,#242424 0,#242424 419px,#161616 419px,#161616 424px,#2b2b2b 424px)"><span class="pn" style="left:60px">∨ Waveform</span></div>
<div class="a" style="left:0;top:594.6px;width:1600px;height:36px;background:linear-gradient(90deg,#242424 0,#242424 419px,#161616 419px,#161616 424px,#363636 424px)"></div>
<div class="a" style="left:75px;top:610px;color:#bdbdbd;font-size:7px">Waveform</div>
<div class="a" style="left:453px;top:603px;width:879px;height:10px;background:#e8da6a;border-top:2px solid #5d5830;border-bottom:1px solid #111"></div>
<div class="a" style="left:453px;top:621px;width:879px;height:10px;background:#e8da6a;border-top:2px solid #5d5830;border-bottom:1px solid #111"></div>
<div class="r" style="top:630.7px"><s class="eye"></s><u class="tw">›</u><i class="lb" style="background:#3aa33a"></i><em class="n">41</em><i class="ic"></i><span class="nm">[FILA]</span><span class="sh">⚉</span><i class="sl"></i><span class="md">Normal</span><span class="tm">None</span><span class="sp">@</span><span class="pl">None</span><b class="g" style="left:701px;width:146px"></b><b class="gf" style="left:847px;width:690px"></b></div>
<div class="r sel" style="top:639.7px"><s class="eye"></s><u class="tw">∨</u><i class="lb" style="background:#3aa33a"></i><em class="n">42</em><i class="ic"></i><span class="nm" style="background:#bbb;color:#111;padding:0 2px;width:108px">[PhotoSite-Loadin.mov]</span><span class="sh">⚉</span><i class="sl"></i><span class="md">Normal</span><span class="tm">None</span><span class="sp">@</span><span class="pl">None</span><b class="g" style="left:673px;width:28px;background:#55a050"></b></div>
<div class="r p" style="top:648.8px"><span class="kn">◂ ◆ ▸</span><span class="pw">◷</span><span class="pn">Time Remap</span><span class="pv">0;00;02;21</span><i class="k" style="left:671px"></i><i class="k" style="left:689px"></i><i class="k" style="left:693px"></i><i class="k" style="left:710px"></i></div>
<div class="r" style="top:657.8px"><s class="eye"></s><u class="tw">∨</u><i class="lb" style="background:#3aa33a"></i><em class="n">43</em><i class="ic"></i><span class="nm">[ANC Waves 2]</span><span class="sh">⚉</span><i class="sl"></i><span class="md">Normal</span><span class="tm">None</span><span class="sp">@</span><span class="pl">None</span><b class="g" style="left:633px;width:435px"></b></div>
<div class="r p" style="top:666.8px"><span class="kn">◂ ◆ ▸</span><span class="pw">◷</span><span class="pn">Position</span><span class="pv">960.0,-543.0</span><span class="I" style="left:671px;font-size:6px">⧗⧗</span></div>
<div class="r" style="top:675.9px"><s class="eye"></s><u class="tw">›</u><i class="lb" style="background:#3aa33a"></i><em class="n">44</em><i class="ic"></i><span class="nm">[Basic-OG Site]</span><span class="sh">⚉</span><i class="sl"></i><span class="md">Normal</span><span class="tm">None</span><span class="sp">@</span><span class="pl">None</span><b class="g" style="left:619px;width:14px"></b><b class="gf" style="left:633px;width:857px"></b></div>
<div class="r" style="top:684.9px"><s class="eye"></s><u class="tw">∨</u><i class="lb" style="background:#a9a6d6"></i><em class="n">45</em><i class="ic"></i><span class="nm">[archive_basic_secret_AD2.jpg]</span><span class="sh">⚉</span><i class="sl"></i><span class="md">Normal</span><span class="tm">None</span><span class="sp">@</span><span class="pl">None</span><b class="v" style="left:611px;width:33px"></b></div>
<div class="r p" style="top:693.9px"><span class="pw" style="color:#aaa">◷</span><span class="pn">Position</span><span class="pv">960.0,1032.0</span><span class="I" style="left:698px">I</span></div>
<div class="r" style="top:703px"><s class="eye"></s><u class="tw">∨</u><i class="lb" style="background:#a9a6d6"></i><em class="n">46</em><i class="ic"></i><span class="nm">[005.0_...D_Desktop_product2_JV.jpg]</span><span class="sh">⚉</span><i class="sl"></i><span class="md">Normal</span><span class="tm">None</span><span class="sp">@</span><span class="pl">None</span><b class="v" style="left:600px;width:44px"></b></div>
<div class="r p" style="top:712px"><span class="kn">◂ ◆ ▸</span><span class="pw">◷</span><span class="pn">Scale</span><span class="pv">⊖ 98.0,98.0%</span><i class="k" style="left:575px"></i><i class="k" style="left:584px"></i></div>
<div class="r" style="top:721px"><s class="eye"></s><u class="tw">›</u><i class="lb" style="background:#3aa33a"></i><em class="n">47</em><i class="ic"></i><span class="nm">[Singer-scroll Compiled]</span><span class="sh">⚉</span><i class="sl"></i><span class="md">Normal</span><span class="tm">None</span><span class="sp">@</span><span class="pl">None</span><b class="g" style="left:547px;width:29px"></b></div>
<div class="r" style="top:730px"><s class="eye"></s><u class="tw">›</u><i class="lb" style="background:#3aa33a"></i><em class="n">48</em><i class="ic"></i><span class="nm">[Originals Rotating]</span><span class="sh">⚉</span><i class="sl"></i><span class="md">Normal</span><span class="tm">None</span><span class="sp">@</span><span class="pl">None</span><b class="g" style="left:527px;width:25px"></b><b class="gf" style="left:552px;width:228px"></b></div>
<div class="r" style="top:739.1px"><s class="eye"></s><u class="tw">∨</u><i class="lb" style="background:#a9a6d6"></i><em class="n">49</em><i class="ic"></i><span class="nm">[volcom_module1.jpg]</span><span class="sh">⚉</span><i class="sl"></i><span class="md">Normal</span><span class="tm">None</span><span class="sp">@</span><span class="pl">None</span><b class="v" style="left:524px;width:12px"></b></div>
<div class="r p" style="top:748.1px"><span class="kn">◂ ◆ ▸</span><span class="pw">◷</span><span class="pn">Scale</span><span class="pv">⊖ 98.0,98.0%</span><i class="k" style="left:523px"></i><i class="k" style="left:532px"></i></div>
<div class="r" style="top:757.1px"><s class="eye"></s><u class="tw">›</u><i class="lb" style="background:#3aa33a"></i><em class="n">50</em><i class="ic"></i><span class="nm">[UA Wake Up]</span><span class="sh">⚉</span><i class="sl"></i><span class="md">Normal</span><span class="tm">None</span><span class="sp">@</span><span class="pl">None</span><b class="g" style="left:521px;width:19px"></b></div>
<div class="r" style="top:766.2px"><s class="eye"></s><u class="tw">›</u><i class="lb" style="background:#3aa33a"></i><em class="n">51</em><i class="ic"></i><span class="nm">[Untitled-9.jpg]</span><span class="sh">⚉</span><i class="sl"></i><span class="md">Normal</span><span class="tm">None</span><span class="sp">@</span><span class="pl">None</span><b class="g" style="left:519px;width:20px"></b></div>
<div class="r" style="top:775.2px"><s class="eye"></s><u class="tw">∨</u><i class="lb" style="background:#3aa33a"></i><em class="n">52</em><i class="ic"></i><span class="nm">[d043e3...b39a4d97f1c_Landing 1.jpg]</span><span class="sh">⚉</span><i class="sl"></i><span class="md">Normal</span><span class="tm">None</span><span class="sp">@</span><span class="pl">None</span><b class="g" style="left:517px;width:5px"></b></div>
<div class="r p" style="top:784.2px"><span class="pw" style="color:#aaa">◷</span><span class="pn">Position</span><span class="pv">958.5,480.0</span><span class="I" style="left:698px">I</span></div>
<div class="r" style="top:793.3px"><s class="eye"></s><u class="tw">›</u><i class="lb" style="background:#3aa33a"></i><em class="n">53</em><i class="ic"></i><span class="nm">[Grid Text 2_2-sized.mov]</span><span class="sh">⚉</span><i class="sl"></i><span class="md">Normal</span><span class="tm">None</span><span class="sp">@</span><span class="pl">None</span><b class="gf" style="left:480px;width:47px"></b><b class="g" style="left:507px;width:12px"></b></div>
<div class="r" style="top:802.3px"><s class="eye"></s><u class="tw">›</u><i class="lb" style="background:#3aa33a"></i><em class="n">54</em><i class="ic"></i><span class="nm">[JWS_Web_Cinematic-promo.mov]</span><span class="sh">⚉</span><i class="sl"></i><span class="md">Normal</span><span class="tm">None</span><span class="sp">@</span><span class="pl">None</span><b class="gf" style="left:480px;width:52px"></b><b class="g" style="left:497px;width:10px"></b></div>
<div class="r" style="top:811.3px"><s class="eye"></s><u class="tw">›</u><i class="lb" style="background:#3aa33a"></i><em class="n">55</em><i class="ic"></i><span class="nm">[JWS_Web_Cinematic-promo.mov]</span><span class="sh">⚉</span><i class="sl"></i><span class="md">Normal</span><span class="tm">None</span><span class="sp">@</span><span class="pl">None</span><b class="gf" style="left:485px;width:51px"></b><b class="g" style="left:488px;width:20px"></b></div>
<div class="r" style="top:820.3px"><s class="eye"></s><u class="tw">›</u><i class="lb" style="background:#3aa33a"></i><em class="n">56</em><i class="ic"></i><span class="nm">[AT3-21 Intro]</span><span class="sh">⚉</span><i class="sl"></i><span class="fx">fx</span><span class="md">Normal</span><span class="tm">None</span><span class="sp">@</span><span class="pl">None</span><span class="a" style="left:450px;font-size:5px;color:#222;background:#aaa;top:1px">▲1</span><b class="g" style="left:457px;width:39px"></b></div>
<div class="r" style="top:829.4px"><s class="eye"></s><u class="tw">›</u><i class="lb" style="background:#a4cfc8"></i><em class="n">57</em><i class="ic"></i><span class="nm">[JWS_Live_SOON-BG.mov]</span><span class="sh">⚉</span><i class="sl"></i><span class="fx">fx</span><span class="md">Screen</span><span class="tm">None</span><span class="sp">@</span><span class="pl">None</span><b class="tf" style="left:426px;width:173px"></b><b class="t" style="left:426px;width:22px"></b></div>
<div class="r" style="top:838.4px"><s class="eye"></s><u class="tw">›</u><i class="lb" style="background:#a4cfc8"></i><em class="n">58</em><i class="ic"></i><span class="nm">[JWS_Live_SOON-BG.mov]</span><span class="sh">⚉</span><i class="sl"></i><span class="md">Normal</span><span class="tm">None</span><span class="sp">@</span><span class="pl">None</span><b class="tf" style="left:426px;width:173px"></b><b class="t" style="left:426px;width:22px"></b></div>
<div class="r" style="top:847.4px"><s class="eye"></s><u class="tw">›</u><i class="lb" style="background:#777"></i><em class="n">59</em><i class="ic" style="background:#555"></i><span class="nm">[Dark Gray Solid 1]</span><span class="sh">⚉</span><i class="sl"></i><span class="md">Normal</span><span class="tm">None</span><span class="sp">@</span><span class="pl">None</span><b class="g" style="left:911px;width:264px"></b></div>
<div class="r" style="top:856.5px"><s class="eye"></s><u class="tw">›</u><i class="lb" style="background:#777"></i><em class="n">60</em><i class="ic" style="background:#555"></i><span class="nm">[Dark Gray Solid 1]</span><span class="sh">⚉</span><i class="sl"></i><span class="md">Normal</span><span class="tm">None</span><span class="sp">@</span><span class="pl">None</span><b class="g" style="left:426px;width:485px"></b></div>

<div class="a" style="left:701px;top:246px;width:1px;height:620px;background:#3d8ee0"></div>
<div class="a" style="left:698px;top:246px;width:7px;height:6px;background:#3d9bff;border-radius:0 0 3px 3px"></div>

<div class="a" style="left:0;top:866px;width:1600px;height:11px;background:#1f1f1f"></div>
<div class="a" style="left:4px;top:867px;color:#aaa;font-size:6px;letter-spacing:3px">⊜⊝{}</div>
<div class="a" style="left:428px;top:867px;color:#aaa;font-size:6px">▴&nbsp; ○———&nbsp;&nbsp; ▲▲</div>
</body></html>
